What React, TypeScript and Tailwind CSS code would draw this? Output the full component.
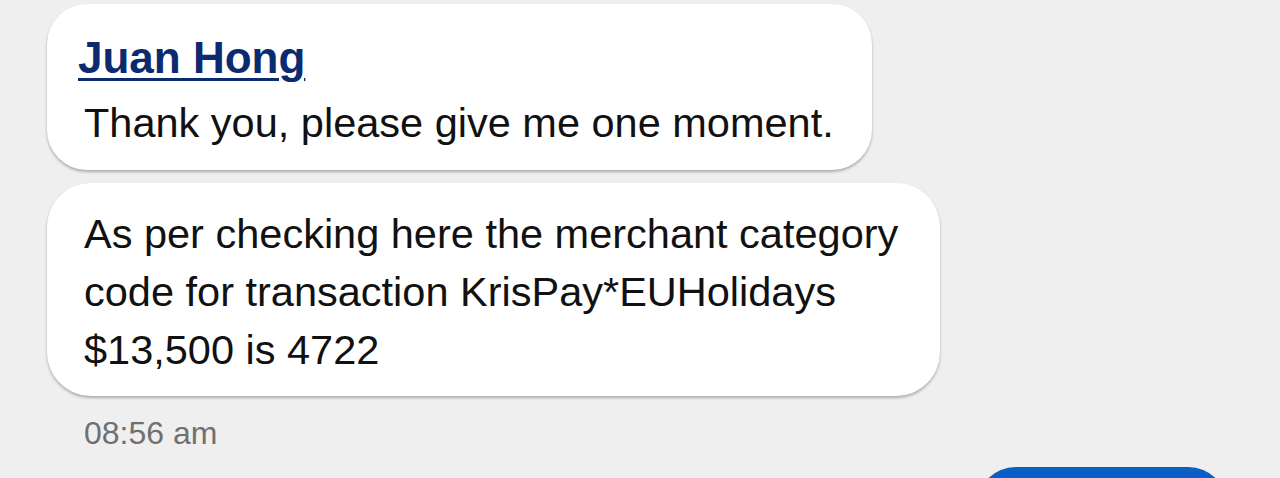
import React from 'react';

const App = () => {
  return (
    <div className="h-[478px] w-full overflow-hidden bg-[#efefef] font-['Liberation_Sans',Arial,sans-serif]">
      <div className="flex flex-col items-start pl-[47px] pt-[4px]">
        {/* Agent bubble with name */}
        <div className="w-[825px] rounded-[40px] bg-white pt-[30px] pb-[18px] shadow-[0_2px_3px_rgba(0,0,0,0.28)]">
          <div className="pl-[31px] text-[44px] leading-[48px] font-bold text-[#0b2a6f] underline decoration-[3px] underline-offset-[5px]">
            Juan Hong
          </div>
          <div className="mt-3 pl-[37px] text-[41.5px] leading-[58px] text-[#111]">
            Thank you, please give me one moment.
          </div>
        </div>

        {/* Second bubble */}
        <div className="mt-[13px] w-[893px] rounded-[44px] bg-white pt-[22px] pb-[17px] pl-[37px] text-[41.5px] leading-[58px] text-[#111] shadow-[0_2px_3px_rgba(0,0,0,0.28)]">
          <div>As per checking here the merchant category</div>
          <div>code for transaction KrisPay*EUHolidays</div>
          <div>$13,500 is 4722</div>
        </div>

        {/* Timestamp */}
        <div className="mt-[17px] pl-[37px] text-[32px] leading-[40px] text-[#707070]">
          08:56 am
        </div>
      </div>

      {/* Outgoing bubble peeking in */}
      <div className="mt-[14px] flex justify-end pr-[52px]">
        <div className="h-[60px] w-[252px] rounded-t-[40px] bg-[#0b5fc4]" />
      </div>
    </div>
  );
};

export default App;
